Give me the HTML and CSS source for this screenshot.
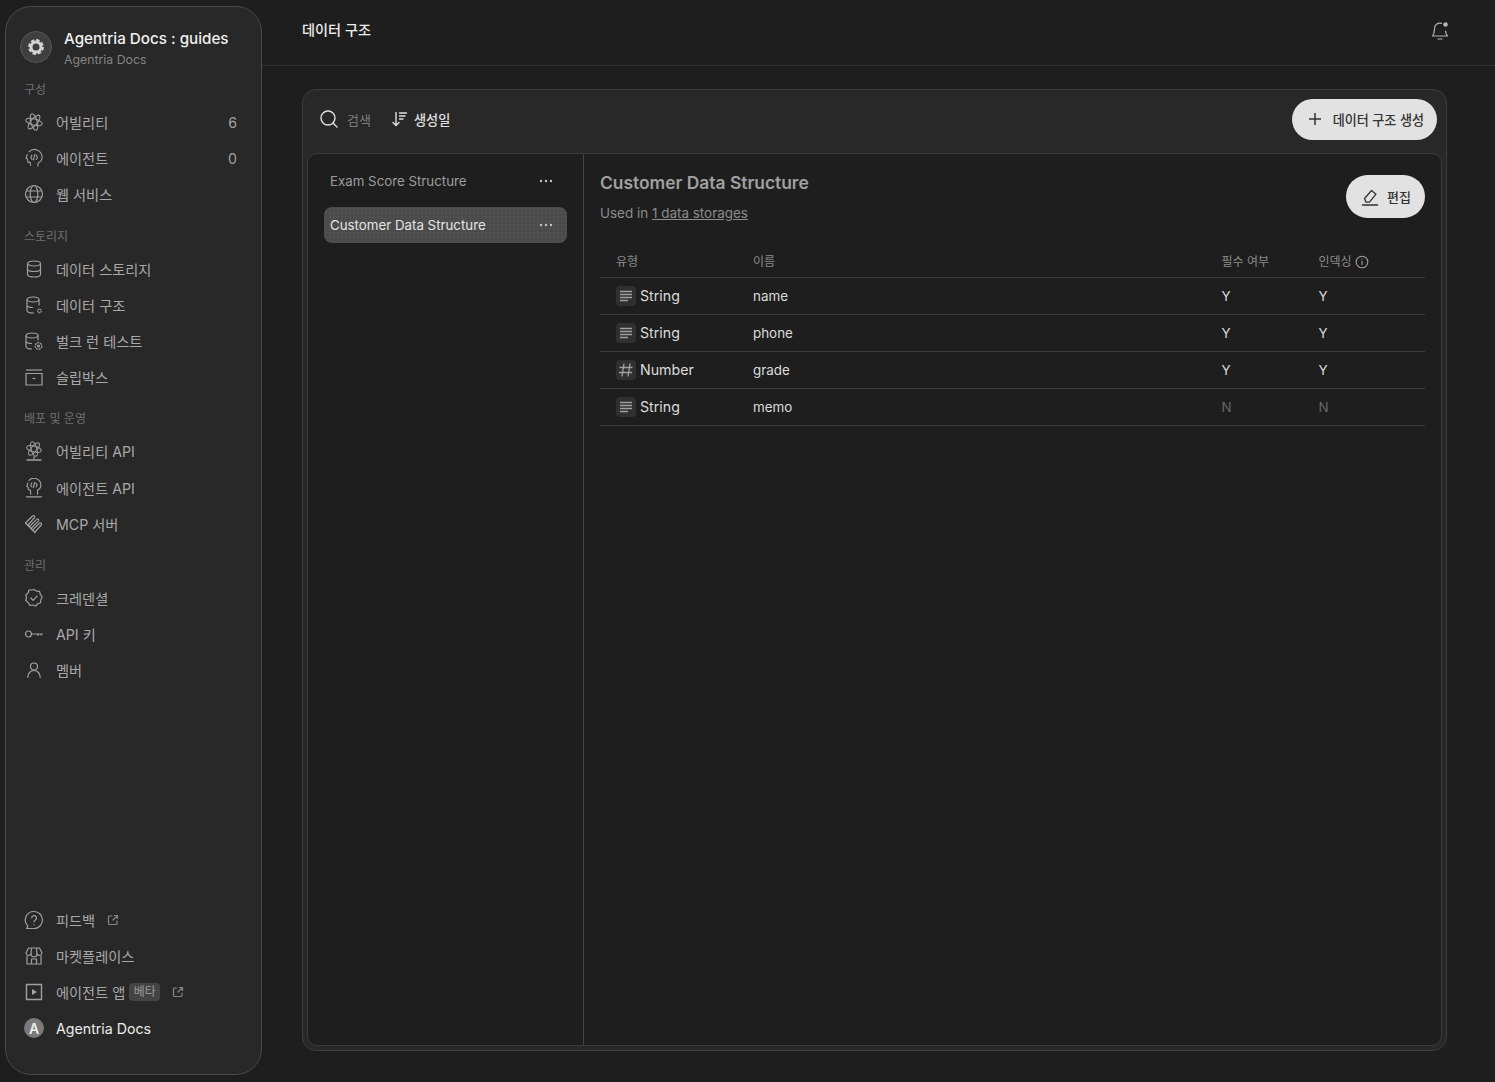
FILE: index.html
```html
<!DOCTYPE html>
<html lang="ko">
  <head>
    <meta charset="UTF-8">
    <title>데이터 구조</title>
    <link rel="stylesheet" href="styles.css">
  </head>
  <body>
    <svg class="sprite" width="0" height="0" aria-hidden="true">
      <symbol id="i-ability" viewBox="0 0 20 20"><g fill="none" stroke="currentColor" stroke-width="1.100"><ellipse cx="10" cy="10" rx="8.500" ry="3.200" transform="rotate(15 10 10)"/><ellipse cx="10" cy="10" rx="8.500" ry="3.200" transform="rotate(75 10 10)"/><ellipse cx="10" cy="10" rx="8.500" ry="3.200" transform="rotate(130 10 10)"/></g></symbol>
      <symbol id="i-agent" viewBox="0 0 20 20"><g fill="none" stroke="currentColor" stroke-width="1.100" stroke-linecap="round" stroke-linejoin="round"><path d="M5 3.800A7.600 7.600 0 0 1 18 9.500c0 2.800-1.600 4.400-3.800 5.400l-.4 3.300"/><path d="M3.200 6.500L2 10.500l1.600.6.200 3 2.400.3.300 3"/><path d="M8 7L6.800 9.200 8 11.400M12.200 7l1.200 2.200-1.200 2.200M10.900 6.500l-1.500 5.400"/></g></symbol>
      <symbol id="i-globe" viewBox="0 0 20 20"><g fill="none" stroke="currentColor" stroke-width="1.200"><circle cx="10" cy="10" r="8.500"/><ellipse cx="10" cy="10" rx="3.800" ry="8.500"/><path d="M2.200 7h15.600M2.200 13h15.600"/></g></symbol>
      <symbol id="i-db" viewBox="0 0 20 20"><g fill="none" stroke="currentColor" stroke-width="1.200"><ellipse cx="10" cy="4.500" rx="6.500" ry="2.500"/><path d="M3.500 4.500v11c0 1.400 2.900 2.500 6.500 2.500s6.500-1.100 6.500-2.500v-11M3.500 10c0 1.400 2.900 2.500 6.500 2.500s6.500-1.100 6.500-2.500"/></g></symbol>
      <symbol id="i-db-small" viewBox="0 0 20 20"><g fill="none" stroke="currentColor" stroke-width="1.200"><ellipse cx="9" cy="4.500" rx="6" ry="2.500"/><path d="M3 4.500v11c0 1.400 2.700 2.500 6 2.500h1M15 4.500v6M3 10c0 1.400 2.700 2.500 6 2.500"/><circle cx="15.500" cy="16" r="1.800" stroke-dasharray="1.500 .5"/></g></symbol>
      <symbol id="i-db-gear" viewBox="0 0 20 20"><g fill="none" stroke="currentColor" stroke-width="1.200"><ellipse cx="8" cy="4.500" rx="6" ry="2.500"/><path d="M2 4.500v11c0 1.400 2.700 2.500 6 2.500M14 4.500v5M2 10c0 1.400 2.700 2.500 6 2.500"/><circle cx="14.500" cy="15" r="3.300" stroke-dasharray="2 .8"/><circle cx="14.500" cy="15" r="1"/></g></symbol>
      <symbol id="i-slip" viewBox="0 0 20 20"><g fill="none" stroke="currentColor" stroke-width="1.200"><path d="M2 3h16"/><path d="M2 6.500h16V18H2z"/><path d="M8.500 11.500h3"/></g></symbol>
      <symbol id="i-ability-api" viewBox="0 0 20 20"><g fill="none" stroke="currentColor" stroke-width="1"><ellipse cx="10" cy="8" rx="7.500" ry="2.800" transform="rotate(15 10 8)"/><ellipse cx="10" cy="8" rx="7.500" ry="2.800" transform="rotate(75 10 8)"/><ellipse cx="10" cy="8" rx="7.500" ry="2.800" transform="rotate(130 10 8)"/><path d="M10 15.500v2.500M2.500 19h15" stroke-width="1.300"/></g></symbol>
      <symbol id="i-agent-api" viewBox="0 0 20 20"><g fill="none" stroke="currentColor" stroke-width="1.100" stroke-linecap="round" stroke-linejoin="round"><path d="M5 2.500A6.800 6.800 0 0 1 16.800 7.500c0 2.400-1.300 3.800-3.300 4.800v4"/><path d="M3.800 5L2.800 8.500l1.400.5.200 2.600 2 .4.300 4.300"/><path d="M7.800 5L6.800 7l1 2M12 5l1 2-1 2M10.700 4.500L9.300 9.500"/><path d="M2.500 18.800h15" stroke-width="1.300"/></g></symbol>
      <symbol id="i-mcp" viewBox="0 0 20 20"><g fill="none" stroke="currentColor" stroke-width="1.200" stroke-linecap="round" stroke-linejoin="round"><path d="M1.500 9L8.500 2c1.200-.8 2.400 0 2.200 1.300L4.500 10.500c-.8 1 .5 2.200 1.500 1.500l6.700-6.700c1.300-1 2.800.5 1.800 1.800L7.500 14c-.8 1 .5 2.200 1.500 1.500l6.500-6.300c1.300-1 2.800.5 1.800 1.800L11 18"/><path d="M1.500 9l9.500 9.500"/></g></symbol>
      <symbol id="i-badge" viewBox="0 0 20 20"><g fill="none" stroke="currentColor" stroke-width="1.200" stroke-linejoin="round"><path d="M10 1.500l2.600 1.700 3 .2.700 3 1.900 2.600-1.400 2.700-.2 3-2.900 1-2 2.300-2.700-1-3 .5-1.500-2.600L1.800 12.500l.7-3L1.800 7l2.300-2 .8-2.900 3-.1z"/><path d="M6.800 10l2.300 2.300 4-4.200" stroke-linecap="round"/></g></symbol>
      <symbol id="i-key" viewBox="0 0 20 20"><g fill="none" stroke="currentColor" stroke-width="1.200"><circle cx="4.500" cy="10" r="3"/><path d="M7.500 10h11.500M14 10v2M17 10v1.500"/></g></symbol>
      <symbol id="i-user" viewBox="0 0 20 20"><g fill="none" stroke="currentColor" stroke-width="1.200" stroke-linecap="round"><circle cx="10" cy="6.500" r="3.500"/><path d="M3.800 17.500c0-4 2.500-7 6.200-7s6.200 3 6.200 7"/></g></symbol>
      <symbol id="i-help" viewBox="0 0 20 20"><g fill="none" stroke="currentColor" stroke-width="1.200" stroke-linecap="round"><path d="M10 1.500a8.500 8.500 0 0 1 0 17H2.800l1-2.500A8.500 8.500 0 0 1 10 1.500z"/><path d="M7.700 8a2.400 2.400 0 1 1 3.500 2.100c-.9.500-1.200 1-1.200 1.900"/><path d="M10 14.500v.2"/></g></symbol>
      <symbol id="i-store" viewBox="0 0 20 20"><g fill="none" stroke="currentColor" stroke-width="1.200" stroke-linejoin="round"><path d="M4.500 2h11l2.500 5a2.700 2.700 0 0 1-5 1 3 3 0 0 1-6 0 2.700 2.700 0 0 1-5-1z"/><path d="M7.500 2L7 8M12.500 2l.5 6M3 9.500V18h14V9.500M7.500 18v-5h5v5"/></g></symbol>
      <symbol id="i-play" viewBox="0 0 20 20"><path d="M2.500 2.500h15v15h-15z" fill="none" stroke="currentColor" stroke-width="1.400"/><path d="M8 7l5 3-5 3z" fill="currentColor"/></symbol>
      <symbol id="i-external" viewBox="0 0 12 12"><g fill="none" stroke="currentColor" stroke-width="1.200" stroke-linecap="round"><path d="M5 2H2.500A1 1 0 0 0 1.500 3v6.500a1 1 0 0 0 1 1H9a1 1 0 0 0 1-1V7"/><path d="M6 6l4.500-4.500M7.500 1.500h3v3"/></g></symbol>
      <symbol id="i-lines" viewBox="0 0 16 16"><path d="M2 3.500h12M2 6.500h12M2 9.500h12M2 12.500h8" fill="none" stroke="currentColor" stroke-width="1.300"/></symbol>
      <symbol id="i-hash" viewBox="0 0 16 16"><path d="M6 1.500L4 14.500M12 1.500L10 14.500M1.500 5.500h13M1 10.500h13" fill="none" stroke="currentColor" stroke-width="1.300"/></symbol>
      <symbol id="i-dots" viewBox="0 0 16 16"><g fill="currentColor"><circle cx="3" cy="8" r="1.200"/><circle cx="8" cy="8" r="1.200"/><circle cx="13" cy="8" r="1.200"/></g></symbol>
    </svg>

    <aside class="sidebar">
      <div class="workspace">
        <div class="workspace-logo">
          <svg width="20" height="20" viewBox="0 0 20 20"><circle cx="10" cy="10" r="5" fill="none" stroke="#d4d4d4" stroke-width="3"/><circle cx="10" cy="10" r="7" fill="none" stroke="#d4d4d4" stroke-width="1.800" stroke-dasharray="3.500 2"/></svg>
        </div>
        <div>
          <div class="workspace-title">Agentria Docs : guides</div>
          <div class="workspace-sub">Agentria Docs</div>
        </div>
      </div>

      <div class="nav-group nav-first">
        <div class="nav-label">구성</div>
        <a class="nav-item"><svg class="nav-icon"><use href="#i-ability"/></svg><span>어빌리티</span><em class="nav-count">6</em></a>
        <a class="nav-item"><svg class="nav-icon"><use href="#i-agent"/></svg><span>에이전트</span><em class="nav-count">0</em></a>
        <a class="nav-item"><svg class="nav-icon"><use href="#i-globe"/></svg><span>웹 서비스</span></a>
      </div>
      <div class="nav-group">
        <div class="nav-label">스토리지</div>
        <a class="nav-item"><svg class="nav-icon"><use href="#i-db"/></svg><span>데이터 스토리지</span></a>
        <a class="nav-item"><svg class="nav-icon"><use href="#i-db-small"/></svg><span>데이터 구조</span></a>
        <a class="nav-item"><svg class="nav-icon"><use href="#i-db-gear"/></svg><span>벌크 런 테스트</span></a>
        <a class="nav-item"><svg class="nav-icon"><use href="#i-slip"/></svg><span>슬립박스</span></a>
      </div>
      <div class="nav-group">
        <div class="nav-label">배포 및 운영</div>
        <a class="nav-item"><svg class="nav-icon"><use href="#i-ability-api"/></svg><span>어빌리티 API</span></a>
        <a class="nav-item"><svg class="nav-icon"><use href="#i-agent-api"/></svg><span>에이전트 API</span></a>
        <a class="nav-item"><svg class="nav-icon"><use href="#i-mcp"/></svg><span>MCP 서버</span></a>
      </div>
      <div class="nav-group">
        <div class="nav-label">관리</div>
        <a class="nav-item"><svg class="nav-icon"><use href="#i-badge"/></svg><span>크레덴셜</span></a>
        <a class="nav-item"><svg class="nav-icon"><use href="#i-key"/></svg><span>API 키</span></a>
        <a class="nav-item"><svg class="nav-icon"><use href="#i-user"/></svg><span>멤버</span></a>
      </div>

      <div class="nav-bottom">
        <a class="nav-item"><svg class="nav-icon"><use href="#i-help"/></svg><span>피드백</span><svg class="ext-icon"><use href="#i-external"/></svg></a>
        <a class="nav-item"><svg class="nav-icon"><use href="#i-store"/></svg><span>마켓플레이스</span></a>
        <a class="nav-item"><svg class="nav-icon"><use href="#i-play"/></svg><span>에이전트 앱</span><b class="beta">베타</b><svg class="ext-icon"><use href="#i-external"/></svg></a>
        <a class="nav-item nav-user"><span class="avatar">A</span><span>Agentria Docs</span></a>
      </div>
    </aside>

    <main class="main">
      <header class="topbar">
        <h1 class="page-title">데이터 구조</h1>
        <svg class="bell" width="20" height="20" viewBox="0 0 20 20"><g fill="none" stroke="#b4b4b4" stroke-width="1.200" stroke-linecap="round" stroke-linejoin="round"><path d="M11.500 2.300A5.500 5.500 0 0 0 4.500 8c0 4-.8 5.500-2 7h15c-1.100-1.300-1.800-2.600-2-5"/><path d="M8 18h4"/></g><circle cx="15.500" cy="3.500" r="2.300" fill="#b4b4b4"/></svg>
      </header>

      <section class="panel">
        <div class="toolbar">
          <svg class="tool-icon" width="20" height="20" viewBox="0 0 20 20"><g fill="none" stroke="#e0e0e0" stroke-width="1.400" stroke-linecap="round"><circle cx="9" cy="9" r="7"/><path d="M14.200 14.200L18 18"/></g></svg>
          <span class="search-label">검색</span>
          <svg class="tool-icon sort-icon" width="16" height="16" viewBox="0 0 16 16"><g fill="none" stroke="#e0e0e0" stroke-width="1.400" stroke-linecap="round" stroke-linejoin="round"><path d="M4 1.500v13M1 11.500l3 3 3-3"/><path d="M7.500 2h7M7.500 5h5.500M7.500 8h3.500"/></g></svg>
          <span class="sort-label">생성일</span>
          <button class="btn btn-create"><svg width="14" height="14" viewBox="0 0 14 14"><path d="M7 1v12M1 7h12" stroke="#333" stroke-width="1.500"/></svg><span>데이터 구조 생성</span></button>
        </div>

        <div class="content">
          <div class="list">
            <div class="list-item"><span>Exam Score Structure</span><svg class="dots"><use href="#i-dots"/></svg></div>
            <div class="list-item is-active"><span>Customer Data Structure</span><svg class="dots"><use href="#i-dots"/></svg></div>
          </div>

          <div class="detail">
            <div class="detail-head">
              <div>
                <h2 class="detail-title">Customer Data Structure</h2>
                <p class="detail-sub">Used in <a>1 data storages</a></p>
              </div>
              <button class="btn btn-edit"><svg width="18" height="18" viewBox="0 0 18 18"><g fill="none" stroke="#333" stroke-width="1.300" stroke-linejoin="round"><path d="M3.500 10.500L10.500 2.500l4.500 3.700-6.500 8H5z"/><path d="M1.500 17h15" stroke-linecap="round"/></g></svg><span>편집</span></button>
            </div>

            <table class="fields">
              <thead>
                <tr><th class="col-type">유형</th><th>이름</th><th class="col-req">필수 여부</th><th class="col-idx">인덱싱 <svg class="info" width="14" height="14" viewBox="0 0 14 14"><g fill="none" stroke="#a0a0a0" stroke-width="1.100"><circle cx="7" cy="7" r="5.800"/><path d="M7 6v4M7 3.800v1"/></g></svg></th></tr>
              </thead>
              <tbody>
                <tr><td><span class="type"><i class="type-icon"><svg><use href="#i-lines"/></svg></i>String</span></td><td>name</td><td>Y</td><td>Y</td></tr>
                <tr><td><span class="type"><i class="type-icon"><svg><use href="#i-lines"/></svg></i>String</span></td><td>phone</td><td>Y</td><td>Y</td></tr>
                <tr><td><span class="type"><i class="type-icon"><svg><use href="#i-hash"/></svg></i>Number</span></td><td>grade</td><td>Y</td><td>Y</td></tr>
                <tr><td><span class="type"><i class="type-icon"><svg><use href="#i-lines"/></svg></i>String</span></td><td>memo</td><td class="is-no">N</td><td class="is-no">N</td></tr>
              </tbody>
            </table>
          </div>
        </div>
      </section>
    </main>
  </body>
</html>
```

FILE: styles.css
```css
:root {
  --bg-page: #1e1e1e;
  --bg-raised: #282828;
  --line: #3c3c3c;
  --line-soft: #333;
  --text-main: #ececec;
  --text-nav: #a8a8a8;
  --text-muted: #7c7c7c;
  --btn-bg: #e2e2e2;
}

* {
  box-sizing: border-box;
}

html,
body {
  height: 100%;
}

body {
  margin: 0;
  display: flex;
  overflow: hidden;
  background: var(--bg-page);
  color: var(--text-main);
  font-family: Inter, "Noto Sans CJK KR", "Noto Sans", sans-serif;
  font-size: 14px;
}

.sprite {
  position: absolute;
}

/* Sidebar */
.sidebar {
  flex: 0 0 257px;
  margin: 6px 0 7px 5px;
  padding: 22px 0 27.500px 18px;
  display: flex;
  flex-direction: column;
  background: var(--bg-raised);
  border: 1px solid #4a4a4a;
  border-radius: 26px;
}

.workspace {
  display: flex;
  align-items: flex-start;
  gap: 12px;
  margin-left: -4px;
}

.workspace-logo {
  flex: none;
  width: 32px;
  height: 32px;
  margin-top: 2px;
  display: flex;
  align-items: center;
  justify-content: center;
  background: #3f3f3f;
  border: 1px solid #565656;
  border-radius: 50%;
}

.workspace-title {
  font-size: 15.200px;
  line-height: 20px;
  font-weight: 500;
  color: #f0f0f0;
}

.workspace-sub {
  margin-top: 2px;
  font-size: 12.300px;
  line-height: 18px;
  color: #858585;
}

.nav-group {
  margin-top: 16px;
}

.nav-first {
  margin-top: 12.500px;
}

.nav-label {
  height: 16px;
  margin-bottom: 6px;
  font-size: 12px;
  line-height: 16px;
  color: #6f6f6f;
}

.nav-first .nav-label {
  margin-bottom: 6.500px;
}

.nav-item {
  display: flex;
  align-items: center;
  height: 36.200px;
  padding-right: 24px;
  color: var(--text-nav);
  font-size: 14.200px;
}

.nav-icon {
  flex: none;
  width: 20px;
  height: 20px;
  margin-right: 12px;
  color: #a0a0a0;
}

.nav-count {
  margin-left: auto;
  font-style: normal;
  color: #a0a0a0;
}

.nav-bottom {
  margin-top: auto;
}

.ext-icon {
  width: 12px;
  height: 12px;
  margin-left: 12px;
  color: #858585;
}

.beta {
  margin-left: 4px;
  padding: 0 4.500px;
  height: 18px;
  line-height: 18px;
  font-size: 12px;
  font-weight: 400;
  color: #9a9a9a;
  background: #444;
  border-radius: 4px;
}

.nav-user {
  color: var(--text-main);
}

.avatar {
  flex: none;
  width: 20px;
  height: 20px;
  margin-right: 12px;
  display: flex;
  align-items: center;
  justify-content: center;
  background: #7a7a7a;
  border-radius: 50%;
  font-size: 14px;
  font-weight: 600;
  color: #eee;
}

/* Main area */
.main {
  flex: 1;
  min-width: 0;
  display: flex;
  flex-direction: column;
}

.topbar {
  flex: none;
  height: 66px;
  padding: 0 45px 7px 40px;
  display: flex;
  align-items: center;
  justify-content: space-between;
  border-bottom: 1px solid var(--line-soft);
}

.page-title {
  margin: 0;
  font-size: 14.200px;
  font-weight: 500;
  color: var(--text-main);
}

.bell {
  margin-top: 4px;
}

.panel {
  flex: 1;
  margin: 23px 48px 31px 40px;
  padding: 0 4px 4px;
  display: flex;
  flex-direction: column;
  min-height: 0;
  background: var(--bg-raised);
  border: 1px solid #3e3e3e;
  border-radius: 14px;
}

.toolbar {
  flex: none;
  height: 63px;
  padding: 0 5px 5px 12px;
  display: flex;
  align-items: center;
}

.tool-icon {
  flex: none;
}

.search-label {
  margin-left: 8px;
  font-size: 13px;
  color: #7c7c7c;
}

.sort-icon {
  margin-left: 21px;
}

.sort-label {
  margin-left: 6px;
  font-size: 13.200px;
  font-weight: 500;
  color: #e0e0e0;
}

.btn {
  display: flex;
  align-items: center;
  border: 0;
  border-radius: 22px;
  background: var(--btn-bg);
  color: #333;
  font-family: inherit;
  font-weight: 500;
  font-size: 13px;
}

.btn-create {
  height: 41px;
  margin-left: auto;
  padding: 0 13px 0 16px;
  gap: 11px;
  font-size: 13.100px;
}

.btn-edit {
  height: 43px;
  margin-top: 3px;
  padding: 0 14px 0 15px;
  gap: 8px;
}

.content {
  flex: 1;
  min-height: 0;
  display: flex;
  background: var(--bg-page);
  border: 1px solid var(--line);
  border-radius: 10px;
}

.list {
  flex: 0 0 276px;
  padding: 9px 16px 8px;
  border-right: 1px solid #444;
}

.list-item {
  display: flex;
  align-items: center;
  justify-content: space-between;
  height: 36px;
  margin-bottom: 8px;
  padding: 0 6px;
  border-radius: 8px;
  color: #9c9c9c;
  font-size: 13.300px;
}

.list-item.is-active {
  background-color: #4b4b4b;
  background-image: radial-gradient(rgba(255, 255, 255, 0.04) 0.7px, transparent 0.8px);
  background-size: 4px 4px;
  color: #e4e4e4;
}

.dots {
  width: 16px;
  height: 16px;
  margin-right: 7px;
  color: #c4c4c4;
}

.detail {
  flex: 1;
  min-width: 0;
  padding: 18px 16px 0;
}

.detail-head {
  display: flex;
  align-items: flex-start;
  justify-content: space-between;
}

.detail-title {
  margin: 0;
  font-size: 17.400px;
  line-height: 22px;
  font-weight: 600;
  color: #a0a0a0;
}

.detail-sub {
  margin: 10px 0 0;
  font-size: 13.450px;
  line-height: 18px;
  color: #8c8c8c;
}

.detail-sub a {
  text-decoration: underline;
}

.fields {
  width: 100%;
  margin-top: 18px;
  border-collapse: collapse;
  table-layout: fixed;
}

.fields th {
  height: 37px;
  padding: 4px 0 0 16px;
  text-align: left;
  font-size: 12px;
  font-weight: 400;
  color: #8c8c8c;
  border-bottom: 1px solid var(--line);
}

.fields th:nth-child(2) {
  padding-left: 0;
}

.col-type {
  width: 153px;
}

.col-req {
  width: 97px;
}

.col-idx {
  width: 106.500px;
}

.fields th.col-req,
.fields th.col-idx {
  padding-left: 0;
}

.info {
  vertical-align: -3px;
}

.fields td {
  height: 37px;
  padding: 0;
  font-size: 13.400px;
  color: #dcdcdc;
  border-bottom: 1px solid var(--line);
}

.fields td:first-child {
  padding-left: 16px;
  font-size: 14.200px;
}

.fields td.is-no {
  color: #666;
}

.type {
  display: flex;
  align-items: center;
  gap: 4px;
}

.type-icon {
  width: 20px;
  height: 20px;
  display: flex;
  align-items: center;
  justify-content: center;
  background: #303030;
  border-radius: 4px;
  color: #a0a0a0;
}

.type-icon svg {
  width: 16px;
  height: 16px;
}
```
